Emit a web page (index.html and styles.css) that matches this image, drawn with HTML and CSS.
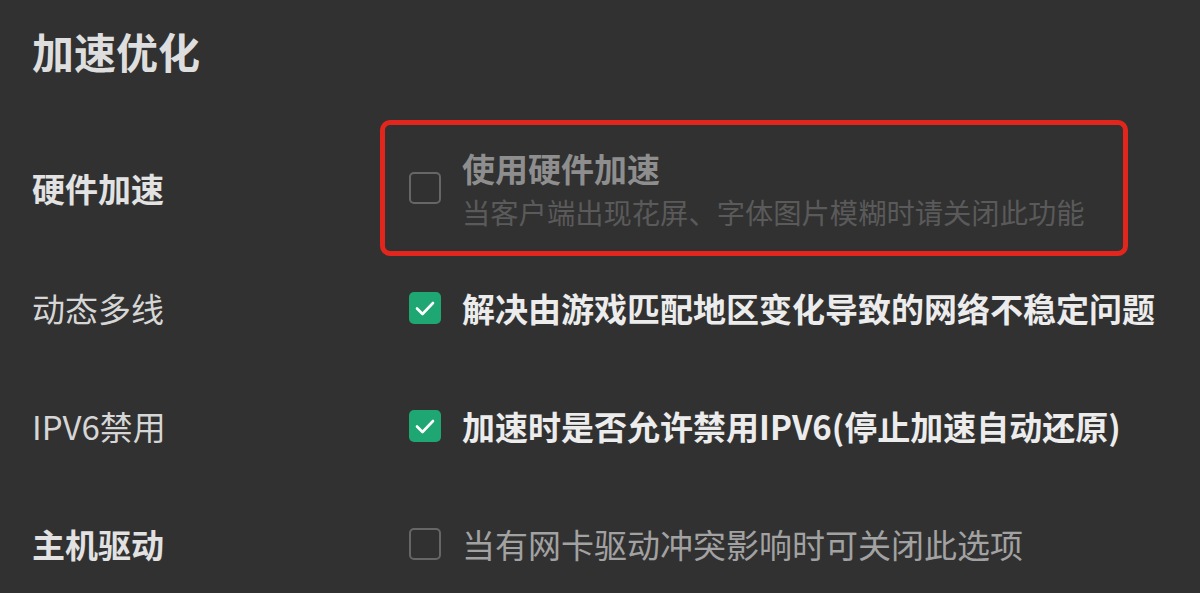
FILE: index.html
```html
<!DOCTYPE html>
<html lang="zh-CN">
<head>
    <meta charset="UTF-8">
    <meta name="viewport" content="width=device-width, initial-scale=1.0">
    <title>加速优化</title>
    <link rel="stylesheet" href="styles.css">
</head>
<body>
    <div class="panel">
        <h1>加速优化</h1>

        <div class="settings">
            <div class="row row-boxed">
                <div class="label strong">硬件加速</div>
                <div class="highlight">
                    <span class="check"></span>
                    <div class="option-text">
                        <div class="option-title">使用硬件加速</div>
                        <div class="option-desc">当客户端出现花屏、字体图片模糊时请关闭此功能</div>
                    </div>
                </div>
            </div>

            <div class="row">
                <div class="label">动态多线</div>
                <div class="option">
                    <span class="check checked">
                        <svg viewBox="0 0 32 32"><path d="M8 16.5l5.5 5.5 10.5-11"/></svg>
                    </span>
                    <span class="option-main">解决由游戏匹配地区变化导致的网络不稳定问题</span>
                </div>
            </div>

            <div class="row">
                <div class="label">IPV6禁用</div>
                <div class="option">
                    <span class="check checked">
                        <svg viewBox="0 0 32 32"><path d="M8 16.5l5.5 5.5 10.5-11"/></svg>
                    </span>
                    <span class="option-main">加速时是否允许禁用IPV6(停止加速自动还原)</span>
                </div>
            </div>

            <div class="row">
                <div class="label strong">主机驱动</div>
                <div class="option">
                    <span class="check"></span>
                    <span class="option-dim">当有网卡驱动冲突影响时可关闭此选项</span>
                </div>
            </div>
        </div>
    </div>
</body>
</html>
```

FILE: styles.css
```css
* {
    margin: 0;
    padding: 0;
    box-sizing: border-box;
}

body {
    font-family: "Noto Sans CJK SC", "Noto Sans", sans-serif;
    background: #313131;
    height: 100vh;
    overflow: hidden;
}

.panel {
    padding: 23px 0 0 32px;
}

h1 {
    font-size: 42px;
    line-height: 56px;
    font-weight: bold;
    color: #dedede;
}

.settings {
    margin-top: 41px;
    display: flex;
    flex-direction: column;
}

.row {
    display: grid;
    grid-template-columns: 348px 1fr;
    align-items: center;
    min-height: 40px;
}

.row + .row {
    margin-top: 78px;
}

.row-boxed + .row {
    margin-top: 32px;
}

.label {
    font-size: 33px;
    line-height: 40px;
    color: #d6d6d6;
}

.label.strong {
    font-weight: bold;
    color: #e2e2e2;
}

.highlight {
    width: 748px;
    height: 136px;
    border: 5px solid #e3261d;
    border-radius: 10px;
    padding: 0 0 0 24px;
    display: flex;
    align-items: center;
    gap: 21px;
}

.option {
    display: flex;
    align-items: center;
    gap: 21px;
    padding-left: 29px;
}

.check {
    width: 32px;
    height: 32px;
    border: 2px solid #666;
    border-radius: 5px;
    flex-shrink: 0;
    display: flex;
    align-items: center;
    justify-content: center;
}

.check.checked {
    border: none;
    background: #1ea673;
}

.check svg {
    width: 32px;
    height: 32px;
    fill: none;
    stroke: #fff;
    stroke-width: 2.6;
    stroke-linecap: round;
    stroke-linejoin: round;
}

.option-text {
    display: flex;
    flex-direction: column;
    gap: 6px;
    margin-top: 2px;
}

.option-title {
    font-size: 33px;
    line-height: 40px;
    font-weight: bold;
    color: #8e8e8e;
}

.option-desc {
    font-size: 28.3px;
    line-height: 36px;
    color: #5a5a5a;
}

.option-main {
    font-size: 33px;
    line-height: 40px;
    font-weight: bold;
    color: #ececec;
}

.option-dim {
    font-size: 33px;
    line-height: 40px;
    color: #a2a2a2;
}
```
